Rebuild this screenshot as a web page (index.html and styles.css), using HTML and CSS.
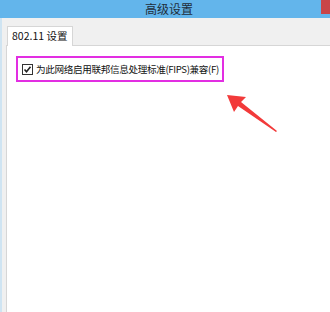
FILE: index.html
```html
<!DOCTYPE html>
<html lang="zh">
<head>
<meta charset="utf-8">
<link rel="stylesheet" href="styles.css">
</head>
<body>
<div class="window">
  <div class="titlebar">
    <span class="title">高级设置</span>
    <span class="close"></span>
  </div>
  <div class="client">
    <div class="tabs">
      <div class="tab">802.11 设置</div>
    </div>
    <div class="panel">
      <div class="highlight">
        <span class="check"><svg width="9" height="9" viewBox="0 0 9 9"><path d="M1.5 4.5 L3.5 6.8 L7.5 1.8" fill="none" stroke="#222" stroke-width="1.6"/></svg></span>
        <span class="label">为此网络启用联邦信息处理标准(FIPS)兼容(F)</span>
      </div>
    </div>
  </div>
  <svg class="arrow" width="60" height="45" viewBox="0 0 60 45">
    <polygon points="2,3 21,5 16,10 52,39 51,40 13,14 9,20" fill="#f23a3a"/>
  </svg>
</div>
</body>
</html>
```
FILE: styles.css
```css
html, body {
  margin: 0;
  padding: 0;
  background: #ffffff;
}
body {
  width: 330px;
  height: 312px;
  overflow: hidden;
  font-family: "Noto Sans CJK SC", "Liberation Sans", sans-serif;
}
.window {
  position: relative;
  width: 330px;
  height: 312px;
  display: flex;
  flex-direction: column;
}
.titlebar {
  height: 18px;
  background: #63b5eb;
  display: flex;
  align-items: center;
  justify-content: center;
  position: relative;
}
.title {
  font-size: 12px;
  color: #1f2d3a;
  line-height: 18px;
  margin-left: 8px;
}
.close {
  position: absolute;
  right: 0;
  top: 0;
  width: 9px;
  height: 14px;
  background: #c94548;
}
.client {
  flex: 1;
  background: #f0f0f0;
  border-left: 2px solid #cfe4f2;
  padding: 8px 0 0 4px;
  display: flex;
  flex-direction: column;
}
.tabs {
  display: flex;
  padding-left: 1px;
  height: 19px;
}
.tab {
  background: #ffffff;
  border: 1px solid #d6d6d6;
  border-bottom: none;
  height: 20px;
  width: 66px;
  box-sizing: border-box;
  font-size: 10.5px;
  line-height: 18px;
  padding-left: 4px;
  color: #111;
  position: relative;
  z-index: 1;
}
.panel {
  flex: 1;
  background: #ffffff;
  border: 1px solid #d6d6d6;
  border-right: none;
  border-bottom: none;
  padding: 10px 0 0 9px;
}
.highlight {
  width: 208px;
  height: 26px;
  box-sizing: border-box;
  border: 2px solid #e22ee2;
  display: flex;
  align-items: center;
  padding-left: 4px;
  gap: 3px;
}
.check {
  width: 9px;
  height: 9px;
  border: 1px solid #333;
  background: #fff;
  display: flex;
  align-items: center;
  justify-content: center;
}
.check svg { display: block; }
.label {
  font-size: 9.6px;
  color: #111;
  white-space: nowrap;
  letter-spacing: -0.35px;
}
.arrow {
  position: absolute;
  left: 225px;
  top: 92px;
}
```
